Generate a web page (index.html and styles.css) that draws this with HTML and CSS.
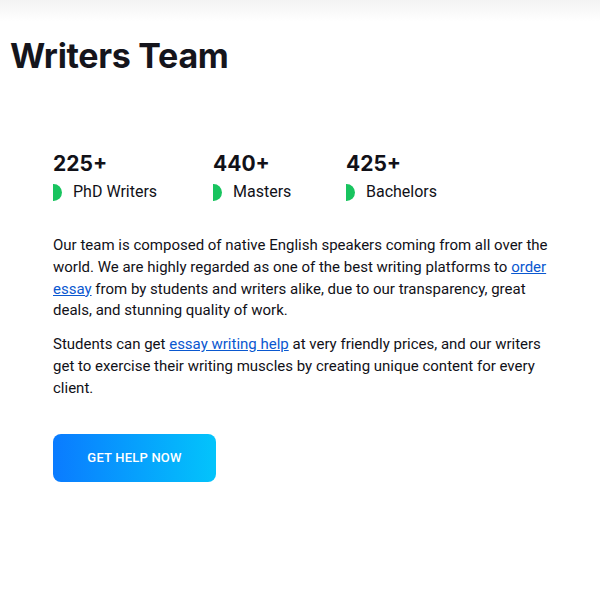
FILE: index.html
```html
<!DOCTYPE html>
<html>
<head>
<meta charset="utf-8">
<link rel="stylesheet" href="styles.css">
</head>
<body>
<div class="topshade"></div>
<h1 class="title">Writers Team</h1>
<section class="content">
  <div class="stats">
    <div class="stat">
      <div class="num">225+</div>
      <div class="label"><span class="dot"></span>PhD Writers</div>
    </div>
    <div class="stat">
      <div class="num">440+</div>
      <div class="label"><span class="dot"></span>Masters</div>
    </div>
    <div class="stat">
      <div class="num">425+</div>
      <div class="label"><span class="dot"></span>Bachelors</div>
    </div>
  </div>
  <p class="text">Our team is composed of native English speakers coming from all over the world. We are highly regarded as one of the best writing platforms to <a href="#">order essay</a> from by students and writers alike, due to our transparency, great deals, and stunning quality of work.</p>
  <p class="text">Students can get <a href="#">essay writing help</a> at very friendly prices, and our writers get to exercise their writing muscles by creating unique content for every client.</p>
  <a class="btn" href="#">GET HELP NOW</a>
</section>
</body>
</html>
```

FILE: styles.css
```css
html, body {
  margin: 0;
  padding: 0;
  background: #ffffff;
}
body {
  font-family: Roboto, "Noto Sans", sans-serif;
  color: #111118;
}
.topshade {
  height: 22px;
  background: linear-gradient(#f3f3f3, #ffffff);
}
.title {
  margin: 14px 0 0 10px;
  font-family: Inter, Roboto, sans-serif;
  font-size: 34px;
  font-weight: 700;
  letter-spacing: -0.3px;
  line-height: 40px;
  color: #15151c;
}
.content {
  padding: 75px 0 0 53px;
  width: 500px;
}
.stats {
  display: flex;
}
.stat {
  display: flex;
  flex-direction: column;
}
.stat:nth-child(1) { width: 160px; }
.stat:nth-child(2) { width: 133px; }
.num {
  font-family: Inter, Roboto, sans-serif;
  font-size: 21px;
  font-weight: 700;
  line-height: 26px;
}
.label {
  display: flex;
  align-items: center;
  font-size: 16px;
  line-height: 24px;
  margin-top: 3px;
}
.dot {
  width: 9px;
  height: 17px;
  background: #18c45f;
  border-radius: 0 9px 9px 0;
  margin-right: 11px;
}
.text {
  font-size: 15px;
  line-height: 21.8px;
  margin: 31px 0 0 0;
}
.text + .text {
  margin-top: 12px;
}
.text a {
  color: #0a58d0;
  text-decoration: underline;
}
.btn {
  display: flex;
  align-items: center;
  justify-content: center;
  margin-top: 34px;
  width: 163px;
  height: 48px;
  border-radius: 8px;
  background: linear-gradient(90deg, #0a7bff, #03c4fb);
  color: #ffffff;
  font-size: 13px;
  font-weight: 500;
  text-decoration: none;
  letter-spacing: 0.2px;
}
```
